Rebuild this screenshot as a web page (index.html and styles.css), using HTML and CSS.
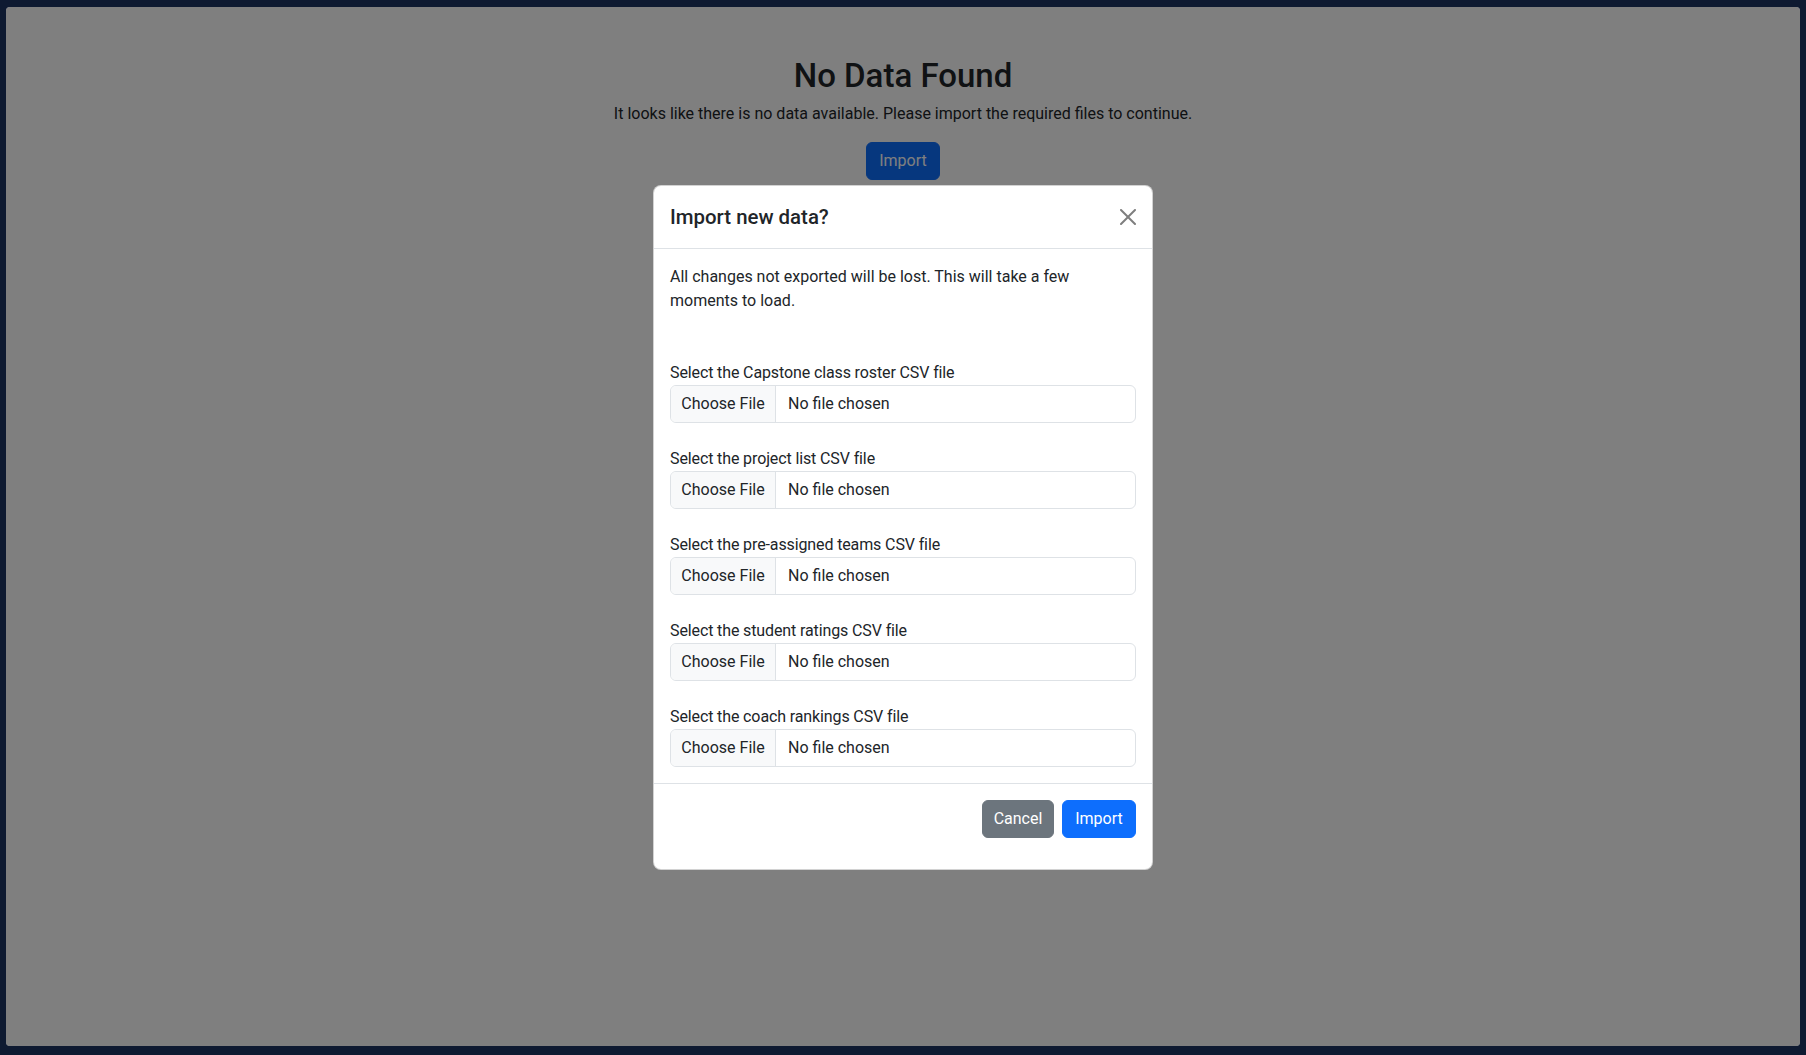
FILE: index.html
```html
<!DOCTYPE html>
<html lang="en">
<head>
<meta charset="utf-8">
<title>Import</title>
<link rel="stylesheet" href="styles.css">
</head>
<body>
<div class="app">
  <main class="empty">
    <h2 class="empty-title">No Data Found</h2>
    <p class="empty-text">It looks like there is no data available. Please import the required files to continue.</p>
    <button class="btn btn-primary" type="button">Import</button>
  </main>

  <div class="backdrop">
    <div class="modal" role="dialog" aria-labelledby="modal-title">
      <div class="modal-header">
        <h5 class="modal-title" id="modal-title">Import new data?</h5>
        <button class="btn-close" type="button" aria-label="Close">
          <svg viewBox="0 0 16 16" width="16" height="16" aria-hidden="true"><path d="M.293.293a1 1 0 0 1 1.414 0L8 6.586 14.293.293a1 1 0 1 1 1.414 1.414L9.414 8l6.293 6.293a1 1 0 0 1-1.414 1.414L8 9.414l-6.293 6.293a1 1 0 0 1-1.414-1.414L6.586 8 .293 1.707a1 1 0 0 1 0-1.414"/></svg>
        </button>
      </div>
      <div class="modal-body">
        <p class="modal-text">All changes not exported will be lost. This will take a few<br>moments to load.</p>
        <div class="fields">
          <div class="field">
            <label class="field-label">Select the Capstone class roster CSV file</label>
            <div class="file"><span class="file-btn">Choose File</span><span class="file-name">No file chosen</span></div>
          </div>
          <div class="field">
            <label class="field-label">Select the project list CSV file</label>
            <div class="file"><span class="file-btn">Choose File</span><span class="file-name">No file chosen</span></div>
          </div>
          <div class="field">
            <label class="field-label">Select the pre-assigned teams CSV file</label>
            <div class="file"><span class="file-btn">Choose File</span><span class="file-name">No file chosen</span></div>
          </div>
          <div class="field">
            <label class="field-label">Select the student ratings CSV file</label>
            <div class="file"><span class="file-btn">Choose File</span><span class="file-name">No file chosen</span></div>
          </div>
          <div class="field">
            <label class="field-label">Select the coach rankings CSV file</label>
            <div class="file"><span class="file-btn">Choose File</span><span class="file-name">No file chosen</span></div>
          </div>
        </div>
      </div>
      <div class="modal-footer">
        <button class="btn btn-secondary" type="button">Cancel</button>
        <button class="btn btn-primary" type="button">Import</button>
      </div>
    </div>
  </div>
</div>
</body>
</html>
```
FILE: styles.css
```css
* { box-sizing: border-box; }

html, body {
  margin: 0;
  height: 100%;
}

body {
  background: #0e1a31;
  padding: 7px 6px 9px 6px;
  font-family: Roboto, "Liberation Sans", sans-serif;
  font-size: 16px;
  line-height: 24px;
  color: #212529;
}

.app {
  position: relative;
  height: 1039px;
  background: #ffffff;
  border-radius: 4px;
  overflow: hidden;
}

.empty {
  display: flex;
  flex-direction: column;
  align-items: center;
  padding-top: 49px;
  text-align: center;
}

.empty-title {
  margin: 0 0 6px;
  font-size: 33px;
  line-height: 40px;
  font-weight: 500;
}

.empty-text {
  margin: 0 0 16px;
}

.btn {
  display: inline-block;
  height: 38px;
  padding: 0;
  border: 1px solid transparent;
  border-radius: 6px;
  font-family: inherit;
  font-size: 16px;
  line-height: 36px;
  text-align: center;
  color: #ffffff;
  cursor: pointer;
}

.btn-primary {
  width: 74px;
  background: #0d6efd;
  border-color: #0d6efd;
}

.btn-secondary {
  width: 72px;
  background: #6c757d;
  border-color: #6c757d;
}

.backdrop {
  position: absolute;
  inset: 0;
  padding-top: 1px;
  background: rgba(0, 0, 0, 0.5);
  display: flex;
  align-items: center;
  justify-content: center;
}

.modal {
  width: 500px;
  background: #ffffff;
  border: 1px solid rgba(0, 0, 0, 0.175);
  border-radius: 8px;
  text-align: left;
}

.modal-header {
  display: flex;
  align-items: center;
  justify-content: space-between;
  padding: 16px;
  border-bottom: 1px solid #dee2e6;
}

.modal-title {
  margin: 0;
  font-size: 20.4px;
  line-height: 30px;
  font-weight: 500;
}

.btn-close {
  display: flex;
  padding: 0;
  border: 0;
  background: transparent;
  opacity: 0.5;
  cursor: pointer;
}

.btn-close svg {
  display: block;
  fill: #000000;
}

.modal-body {
  padding: 16px;
}

.modal-text {
  margin: 0 0 48px;
}

.fields {
  display: flex;
  flex-direction: column;
  gap: 24px;
}

.field-label {
  display: block;
  letter-spacing: -0.12px;
}

.file {
  display: flex;
  align-items: stretch;
  height: 38px;
  border: 1px solid #dee2e6;
  border-radius: 6px;
  overflow: hidden;
  line-height: 36px;
}

.file-btn {
  width: 105px;
  flex: none;
  text-align: center;
  background: #f8f9fa;
  border-right: 1px solid #dee2e6;
}

.file-name {
  padding-left: 12px;
}

.modal-footer {
  display: flex;
  justify-content: flex-end;
  gap: 8px;
  padding: 16px 16px 31px;
  border-top: 1px solid #dee2e6;
}
```
